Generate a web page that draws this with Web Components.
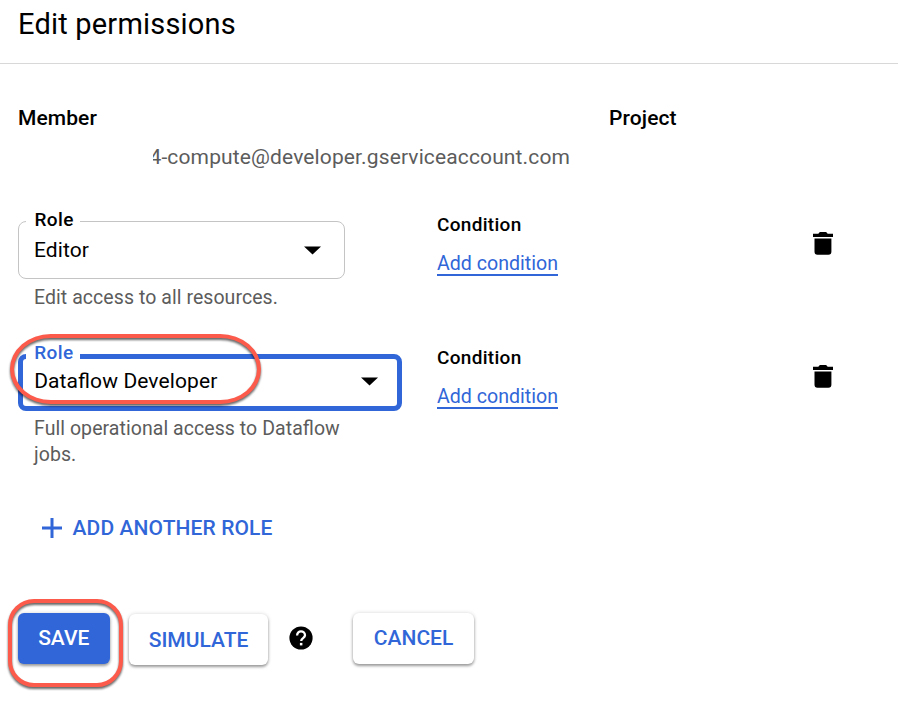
<!DOCTYPE html>
<html lang="en"><head><meta charset="utf-8"><title>Edit permissions</title>
<style>
body{margin:0;background:#fff;color:#000;font-family:Roboto,"Liberation Sans",sans-serif;--blue:#3066d8;--muted:#5c5c5c;--red:#fc5b4b}
</style></head><body>
<permissions-page></permissions-page>
<script>
const define=(name,html)=>customElements.define(name,class extends HTMLElement{
  connectedCallback(){if(this.shadowRoot)return;
    const t=document.createElement('template');
    t.innerHTML=html;
    this.attachShadow({mode:'open'}).append(t.content.cloneNode(true));}
});

define('page-header',`<style>
:host{display:block;box-sizing:border-box;height:64px;padding-left:18px;border-bottom:1.5px solid #d8d8d8}
h1{margin:0;font:400 29px/48px Roboto,sans-serif;letter-spacing:.2px}
</style><h1><slot></slot></h1>`);

define('info-column',`<style>
:host{display:block}
h2{margin:0;font:500 21px/24px Roboto,sans-serif;letter-spacing:.1px}
div{margin-top:14.6px;margin-left:134.5px;overflow:hidden;white-space:nowrap;font-size:21px;line-height:24px;letter-spacing:.13px;color:var(--muted);text-indent:-3px}
</style><h2><slot name="title"></slot></h2><div><slot></slot></div>`);

define('role-select',`<style>
:host{display:block;width:var(--w,327px)}
fieldset{box-sizing:border-box;margin:0;height:69.5px;border:1.5px solid #c4c4c4;border-radius:8px;padding:4px 23px 0 15px;min-width:0}
legend{font-size:19px;font-weight:500;line-height:20px;letter-spacing:.4px;padding:0 6.5px 4px 8.5px;margin-left:-8px}
.value{display:flex;align-items:center;justify-content:space-between;font-size:21px;line-height:24px;letter-spacing:.1px;font-feature-settings:"liga" 1}
svg{display:block;width:17px;height:9px;margin-top:1px}
p{margin:6px 0 0 16px;font-size:19.5px;line-height:26px;letter-spacing:.06px;color:var(--muted);font-feature-settings:"liga" 1}
:host([active]) fieldset{height:68px;border:5px solid var(--blue);padding:0 19px 0 11.2px}
:host([active]) legend{color:var(--blue);padding:0 6.2px 7px 8px}
:host([active]) .value{margin-top:-1px}
:host([active]) p{margin-top:5.2px}
</style><fieldset><legend>Role</legend><div class="value"><slot></slot>
<svg viewBox="0 0 17 9"><path d="M0 .5H17L8.5 8.5Z"/></svg></div></fieldset><p><slot name="hint"></slot></p>`);

define('condition-link',`<style>
:host{display:block;padding-top:3px}
h3{margin:0 0 15px;font:500 19px/24px Roboto,sans-serif;letter-spacing:.3px}
a{display:inline-block;font-size:19.6px;line-height:23px;height:22.4px;color:var(--blue);border-bottom:2px solid var(--blue)}
</style><h3>Condition</h3><a><slot></slot></a>`);

define('delete-icon',`<style>:host{display:block;padding-top:22.8px}svg{display:block}</style>
<svg width="20" height="23" viewBox="0 0 20 23"><path d="M0 1.8H5.3L6.9 0H13.1L14.7 1.8H20V5H0ZM1.5 6.4H18.4V19.5Q18.4 22.7 15.4 22.7H4.5Q1.5 22.7 1.5 19.5Z"/></svg>`);

define('role-row',`<style>:host{display:grid;box-sizing:border-box;height:133px;grid-template-columns:419px 376px 20px;align-items:start}</style>
<slot></slot><condition-link>Add condition</condition-link><delete-icon></delete-icon>`);

define('add-button',`<style>
:host{display:flex;align-items:center;gap:10.6px;padding-left:24px;color:var(--blue);font-weight:500;font-size:21px;line-height:24px;letter-spacing:.1px}
svg{margin-top:1px}
</style><svg width="20" height="20" viewBox="0 0 20 20"><path d="M8.5 0h3v8.5H20v3H11.5V20H8.5V11.5H0V8.5H8.5Z" fill="#3066d8"/></svg><slot></slot>`);

define('action-button',`<style>
:host{display:flex;box-sizing:border-box;height:51px;align-items:center;justify-content:center;border-radius:6px;background:#fff;color:var(--blue);font-weight:500;font-size:21px;line-height:24px;box-shadow:0 2px 3px rgba(0,0,0,.36),0 0 4px rgba(0,0,0,.14)}
:host([primary]){background:var(--blue);color:#fff}
</style><slot></slot>`);

define('help-icon',`<style>:host{display:block}svg{display:block}</style>
<svg width="24" height="24" viewBox="0 0 24 24"><circle cx="12" cy="12" r="11.6"/><path d="M8.1 9.4C8.1 3.8 16 4.4 16 9.3C16 12 12.2 12.2 12.2 15" fill="none" stroke="#fff" stroke-width="2.3"/><rect x="10.9" y="16.9" width="2.5" height="2.5" fill="#fff"/></svg>`);

define('marker-ring',`<style>
:host{position:absolute;box-sizing:border-box;border:4.5px solid var(--red);filter:drop-shadow(0 2px 1px rgba(0,0,0,.6));pointer-events:none}
</style>`);

define('permissions-page',`<style>
:host{display:block;position:relative;width:898px;height:706px;overflow:hidden}
.info{display:grid;grid-template-columns:591px 1fr;padding:42px 0 0 18px;height:103.5px}
.rows{padding-left:18px}
add-button{margin-top:40px}
footer{display:flex;align-items:flex-start;padding:73.4px 0 0 18px}
.save{width:91.5px}.simulate{width:139px;margin:1.5px 0 0 19.5px}help-icon{margin:13.6px 0 0 20.8px}.cancel{width:121px;margin-left:40.3px}
.r1{left:9.5px;top:333.5px;width:251.5px;height:70.5px;border-radius:41px/35.2px}
.r2{left:7.5px;top:598.7px;width:115.5px;height:88.3px;border-radius:26px}
</style>
<page-header>Edit permissions</page-header>
<section class="info"><info-column><span slot="title">Member</span>4-compute@developer.gserviceaccount.com</info-column>
<info-column><span slot="title">Project</span></info-column></section>
<section class="rows">
<role-row><role-select>Editor<span slot="hint">Edit access to all resources.</span></role-select></role-row>
<role-row><role-select active style="--w:384px">Dataflow Developer<span slot="hint">Full operational access to Dataflow<br>jobs.</span></role-select></role-row>
<add-button>ADD ANOTHER ROLE</add-button></section>
<footer><action-button primary class="save">SAVE</action-button><action-button class="simulate">SIMULATE</action-button><help-icon></help-icon><action-button class="cancel">CANCEL</action-button></footer>
<marker-ring class="r1"></marker-ring><marker-ring class="r2"></marker-ring>`);
</script></body></html>
